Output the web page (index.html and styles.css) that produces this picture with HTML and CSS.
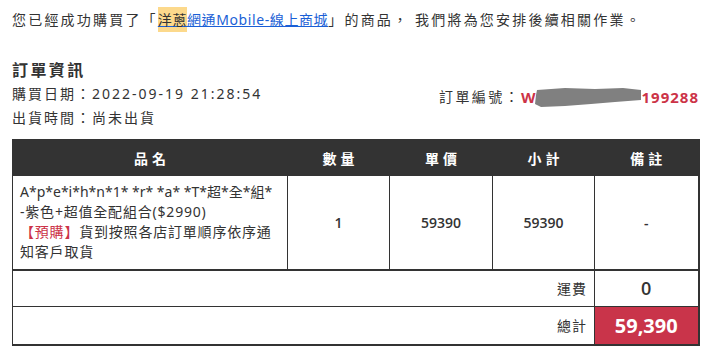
FILE: index.html
```html
<!DOCTYPE html>
<html lang="zh-Hant">
<head>
<meta charset="utf-8">
<link rel="stylesheet" href="styles.css">
</head>
<body>
<p class="intro">您已經成功購買了「<a class="shop" href="#"><mark class="hl">洋蔥</mark>網通Mobile-線上商城</a>」的商品， 我們將為您安排後續相關作業。</p>
<h2 class="title">訂單資訊</h2>
<div class="info">
  <div class="info-left">
    <div class="info-line">購買日期：2022-09-19 21:28:54</div>
    <div class="info-line">出貨時間：尚未出貨</div>
  </div>
  <div class="order-no">訂單編號：<span class="no">W<svg class="blot" width="106" height="20" viewBox="0 0 106 20"><path d="M2 3 L30 1 L60 2 L88 1 L106 3 L106 13 L80 15 L56 17 L30 19 L6 20 L0 17 L1 8 Z" fill="#808080"/></svg>199288</span></div>
</div>
<table class="order">
  <colgroup>
    <col class="c-name"><col class="c-qty"><col class="c-price"><col class="c-sub"><col class="c-note">
  </colgroup>
  <thead>
    <tr><th>品名</th><th>數量</th><th>單價</th><th>小計</th><th>備註</th></tr>
  </thead>
  <tbody>
    <tr class="item">
      <td class="name"><span class="latin">A*p*e*i*h*n*1* *r* *a* *T*超*全*組*</span><br>-紫色+超值全配組合($2990)<br><span class="pre">【預購】</span>貨到按照各店訂單順序依序通知客戶取貨</td>
      <td class="num">1</td>
      <td class="num">59390</td>
      <td class="num">59390</td>
      <td class="num">-</td>
    </tr>
    <tr class="ship">
      <td class="label" colspan="4">運費</td>
      <td class="val">0</td>
    </tr>
    <tr class="total">
      <td class="label" colspan="4">總計</td>
      <td class="val sum">59,390</td>
    </tr>
  </tbody>
</table>
</body>
</html>
```
FILE: styles.css
```css
html, body {
  margin: 0;
  background: #ffffff;
}
body {
  padding: 8px 12px 0 12px;
  font-family: "Noto Sans", "Noto Sans CJK TC", sans-serif;
  color: #333333;
  font-size: 14px;
}
.intro {
  margin: 0;
  font-size: 14px;
  line-height: 24px;
  letter-spacing: 2.2px;
}
.shop {
  color: #1a5fd6;
  text-decoration: underline;
  letter-spacing: 0.6px;
}
.hl {
  background: #fcd98c;
  color: #333333;
  padding: 3px 0;
}
.title {
  margin: 26px 0 0 0;
  font-size: 16px;
  font-weight: 700;
  line-height: 24px;
  letter-spacing: 2.4px;
}
.info {
  display: flex;
  justify-content: space-between;
  align-items: flex-start;
}
.info-line {
  font-size: 14px;
  line-height: 24px;
  letter-spacing: 2px;
}
.order-no {
  padding-top: 3px;
  font-size: 14px;
  line-height: 24px;
  letter-spacing: 2.4px;
  display: flex;
  align-items: center;
}
.no {
  color: #cc3347;
  font-weight: 700;
  font-size: 15px;
  display: inline-flex;
  align-items: center;
  letter-spacing: 1px;
}
.blot {
  display: block;
  margin: 0 1px 0 -2px;
}
.order {
  margin-top: 9px;
  width: 686px;
  border-collapse: collapse;
  table-layout: fixed;
}
.c-name { width: 275px; }
.c-qty { width: 102px; }
.c-price { width: 103px; }
.c-sub { width: 102px; }
.c-note { width: 104px; }
.order th {
  background: #333333;
  color: #ffffff;
  height: 35px;
  padding: 0 0 0 4px;
  font-size: 14px;
  font-weight: 700;
  letter-spacing: 4px;
  text-align: center;
  border: 1px solid #333333;
}
.order td {
  border: 1px solid #333333;
  padding: 0;
}
.order tr > :last-child {
  border-right-width: 2px;
}
.item td {
  height: 94px;
  box-sizing: border-box;
  border-bottom-width: 2px;
}
.name {
  padding: 6px 14px 6px 7px !important;
  font-size: 14px;
  line-height: 20px;
  letter-spacing: 0.8px;
  vertical-align: middle;
}
.latin {
  letter-spacing: 0;
}
.pre {
  color: #cc3347;
}
.num {
  text-align: center;
  font-family: "Open Sans", "Noto Sans CJK TC", sans-serif;
  font-weight: 600;
  font-size: 14px;
}
.label {
  text-align: right;
  padding: 0 7px 0 0 !important;
  font-size: 14px;
  letter-spacing: 1px;
}
.ship td {
  height: 35px;
}
.total td {
  height: 37px;
  border-bottom-width: 2px;
}
.val {
  text-align: center;
  font-family: "Open Sans", sans-serif;
  font-weight: 600;
  font-size: 18px;
}
.sum {
  background: #c9344a;
  color: #ffffff;
  font-weight: 700;
  font-size: 20px;
}
```
